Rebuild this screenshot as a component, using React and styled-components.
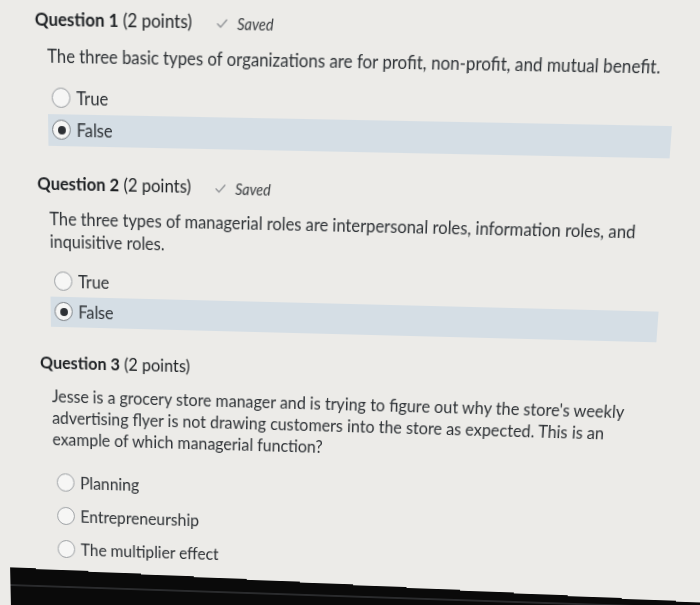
import React from 'react';
import styled, { createGlobalStyle } from 'styled-components';

const GlobalStyle = createGlobalStyle`
  html, body {
    margin: 0;
    padding: 0;
    overflow: hidden;
  }
  body {
    width: 700px;
    height: 605px;
    background: #0a0a0a;
  }
`;

// the shot is a photo of a screen, so the flat page is mapped onto the
// slightly tilted quad that the camera saw
function homography(pairs) {
  const A = [];
  pairs.forEach(([[x, y], [u, v]]) => {
    A.push([x, y, 1, 0, 0, 0, -x * u, -y * u, u]);
    A.push([0, 0, 0, x, y, 1, -x * v, -y * v, v]);
  });
  const n = 8;
  for (let i = 0; i < n; i++) {
    let p = i;
    for (let r = i + 1; r < n; r++) if (Math.abs(A[r][i]) > Math.abs(A[p][i])) p = r;
    [A[i], A[p]] = [A[p], A[i]];
    for (let r = 0; r < n; r++) {
      if (r === i) continue;
      const f = A[r][i] / A[i][i];
      for (let c = i; c <= n; c++) A[r][c] -= f * A[i][c];
    }
  }
  const [a, b, c, d, e, f, g, h] = A.map((row, i) => row[n] / row[i]);
  return `matrix3d(${a}, ${d}, 0, ${g}, ${b}, ${e}, 0, ${h}, 0, 0, 1, 0, ${c}, ${f}, 0, 1)`;
}

const tilt = homography([
  [[48, 113], [48, 113]],
  [[672, 113], [672, 125]],
  [[48, 551], [54, 551]],
  [[672, 551], [640, 570]],
]);

// the element reaches 40px past the left and top of the page so the tilted
// edges stay off-screen; the origin is kept on the page's top-left corner
const Screen = styled.div`
  width: 780px;
  height: 720px;
  margin: -30px 0 0 -40px;
  padding: 30px 0 0 40px;
  background: #ecebe8;
  font-family: Lato, "Open Sans", sans-serif;
  color: #2f3337;
  display: flex;
  flex-direction: column;
  transform-origin: 40px 30px;
  transform: ${tilt};
`;

const Content = styled.div`
  padding: 13.5px 0 0 36px;
  display: flex;
  flex-direction: column;
  gap: 24px;
`;

const Block = styled.section`
  display: flex;
  flex-direction: column;
`;

const Heading = styled.div`
  display: flex;
  align-items: center;
  height: 24px;
  gap: 25px;
`;

const Title = styled.h2`
  margin: 0;
  font-size: 17px;
  font-weight: 400;
  line-height: 24px;
  color: #1d2023;
  white-space: nowrap;

  b {
    font-weight: 700;
  }
`;

const SavedTag = styled.span`
  display: flex;
  align-items: center;
  gap: 9px;
  font-size: 14.5px;
  font-style: italic;
  color: #383b3e;
  margin-top: 3px;
`;

const Prompt = styled.p`
  margin: 11px 0 0 12px;
  font-size: 16.8px;
  line-height: 22px;
  color: #2e3236;

  span {
    display: block;
    white-space: nowrap;
  }
`;

const Options = styled.div`
  margin: ${(p) => (p.$tall ? '16px' : '13px')} 0 0 12px;
  display: flex;
  flex-direction: column;
  width: 624px;
`;

const Option = styled.label`
  display: flex;
  align-items: center;
  height: ${(p) => (p.$tall ? '35px' : '30px')};
  padding-left: 4px;
  gap: 6px;
  background: ${(p) => (p.$selected ? '#d5dee5' : 'transparent')};
  font-size: 16.8px;
  color: #2c3034;
`;

const Radio = styled.span`
  box-sizing: border-box;
  width: 19px;
  height: 19px;
  border-radius: 50%;
  border: 1.5px solid ${(p) => (p.$checked ? '#7c8186' : '#9a9ea2')};
  background: #f6f6f5;
  display: flex;
  align-items: center;
  justify-content: center;

  &::after {
    content: '';
    width: 8px;
    height: 8px;
    border-radius: 50%;
    background: #2e3135;
    display: ${(p) => (p.$checked ? 'block' : 'none')};
  }
`;

// monitor bezel below the page; its top edge runs a little steeper than the page
const Bezel = styled.div`
  flex: 1;
  margin-top: 4px;
  background: #0a0a0a;
  display: flex;
  flex-direction: column;

  &::before {
    content: '';
    flex-shrink: 0;
    width: 740px;
    height: 13px;
    background: linear-gradient(to bottom left, #ecebe8 50%, transparent 50%);
  }

  &::after {
    content: '';
    height: 2px;
    margin-top: 5px;
    background: #2a2b2d;
  }
`;

const Check = () => (
  <svg width="11" height="9" viewBox="0 0 11 9" fill="none">
    <path d="M1 4.8 L4 7.6 L10 1" stroke="#8f9296" strokeWidth="1.3" strokeLinecap="round" strokeLinejoin="round" />
  </svg>
);

const questions = [
  {
    number: 1,
    saved: true,
    lines: ['The three basic types of organizations are for profit, non-profit, and mutual benefit.'],
    options: ['True', 'False'],
    selected: 1,
  },
  {
    number: 2,
    saved: true,
    lines: [
      'The three types of managerial roles are interpersonal roles, information roles, and',
      'inquisitive roles.',
    ],
    options: ['True', 'False'],
    selected: 1,
  },
  {
    number: 3,
    saved: false,
    lines: [
      "Jesse is a grocery store manager and is trying to figure out why the store's weekly",
      'advertising flyer is not drawing customers into the store as expected. This is an',
      'example of which managerial function?',
    ],
    options: ['Planning', 'Entrepreneurship', 'The multiplier effect'],
    selected: -1,
    tall: true,
  },
];

const Question = ({ q }) => (
  <Block>
    <Heading>
      <Title>
        <b>Question {q.number}</b> (2 points)
      </Title>
      {q.saved && (
        <SavedTag>
          <Check />
          Saved
        </SavedTag>
      )}
    </Heading>
    <Prompt>
      {q.lines.map((line) => (
        <span key={line}>{line}</span>
      ))}
    </Prompt>
    <Options $tall={q.tall}>
      {q.options.map((opt, i) => (
        <Option key={opt} $tall={q.tall} $selected={i === q.selected}>
          <Radio $checked={i === q.selected} />
          {opt}
        </Option>
      ))}
    </Options>
  </Block>
);

export default function App() {
  return (
    <>
      <GlobalStyle />
      <Screen>
        <Content>
          {questions.map((q) => (
            <Question key={q.number} q={q} />
          ))}
        </Content>
        <Bezel />
      </Screen>
    </>
  );
}
